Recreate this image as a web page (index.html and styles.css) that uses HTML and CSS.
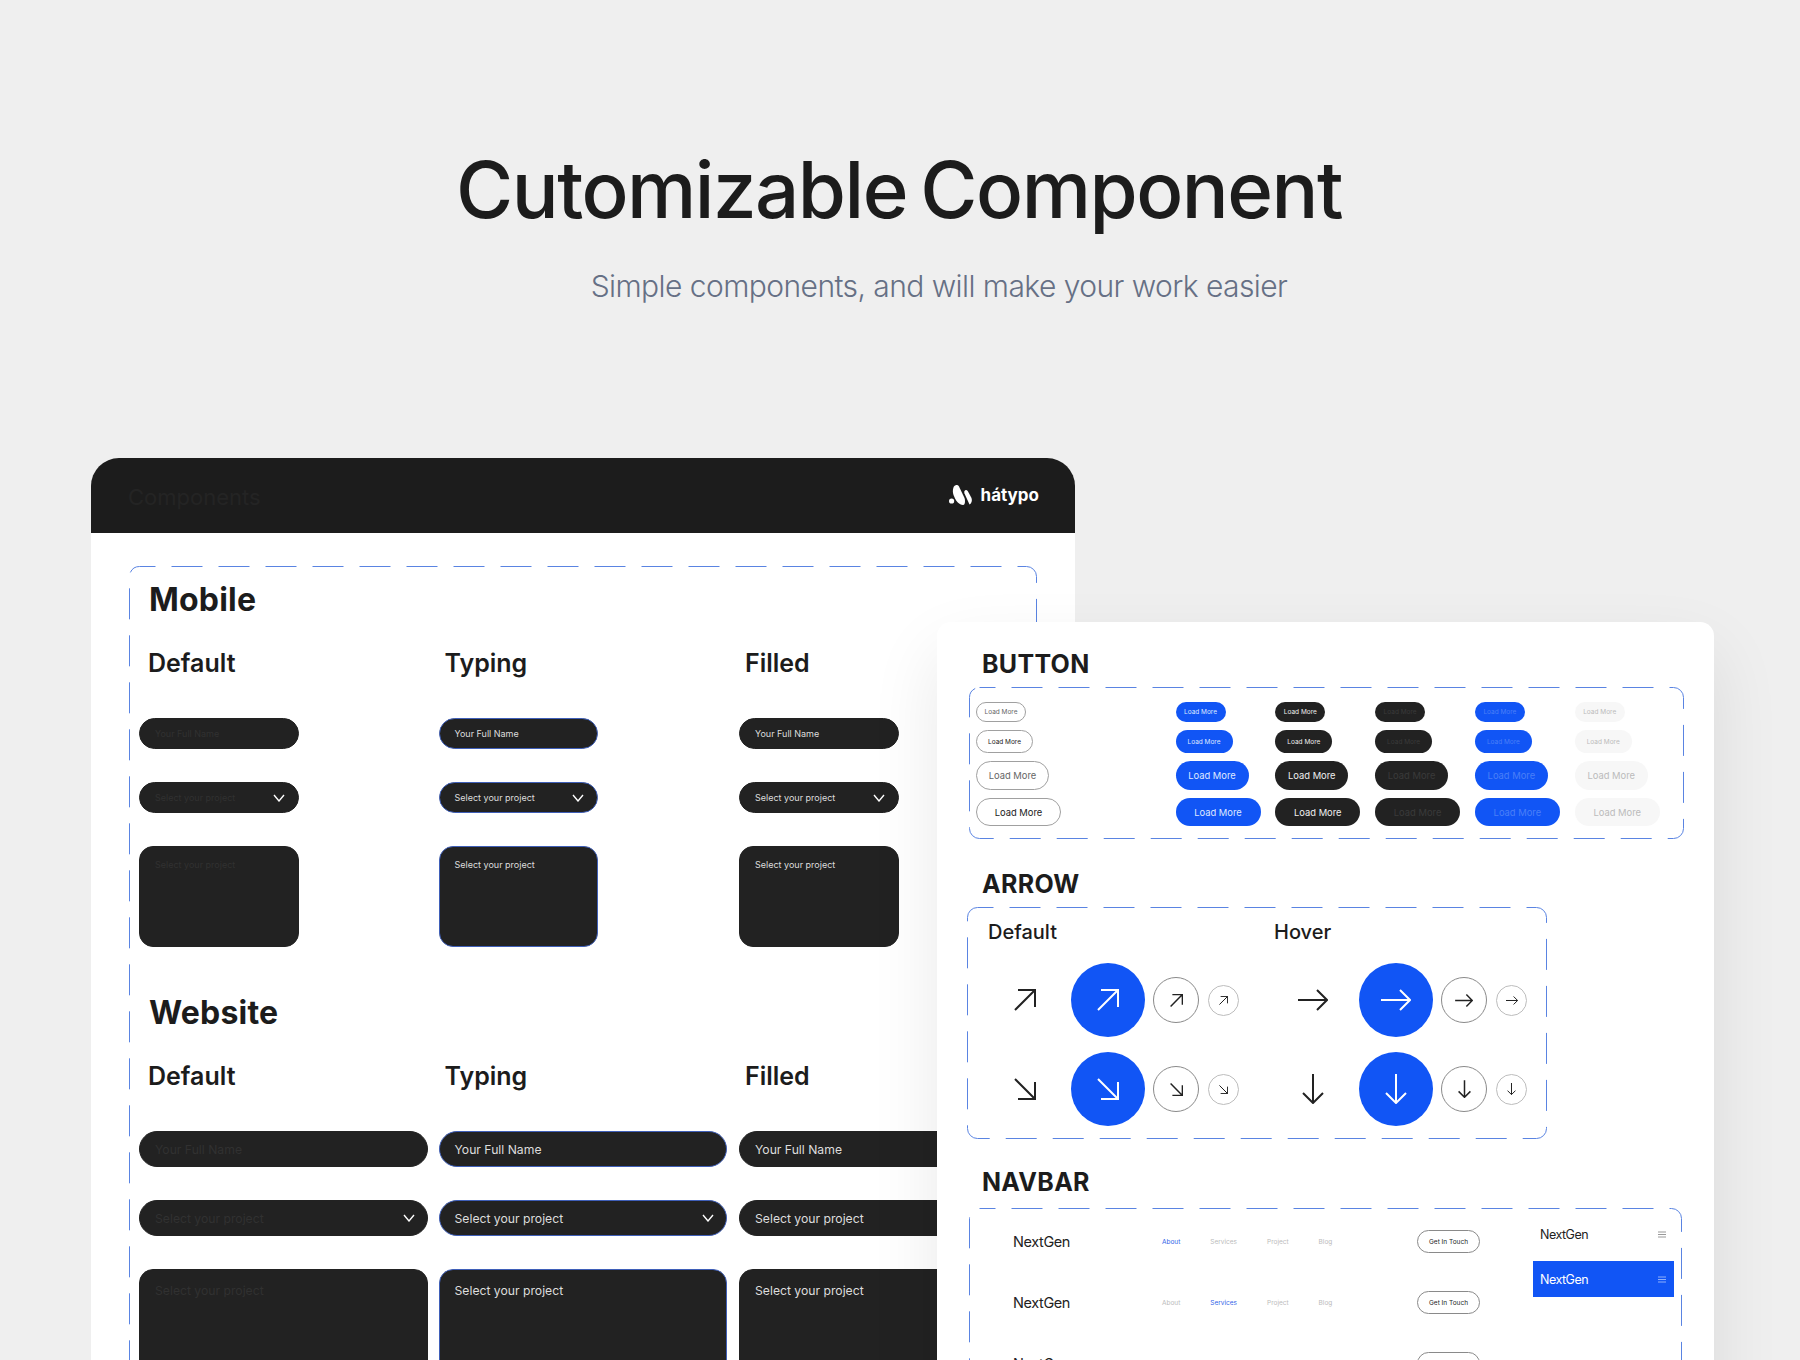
FILE: index.html
```html
<!DOCTYPE html>
<html lang="en">
<head>
<meta charset="utf-8">
<title>Cutomizable Component</title>
<link rel="stylesheet" href="styles.css">
</head>
<body>
<svg class="defs" width="0" height="0" aria-hidden="true">
  <symbol id="a-ne" viewBox="0 0 22 22"><path d="M1 21 21 1M4 1H21V18"/></symbol>
  <symbol id="a-se" viewBox="0 0 22 22"><path d="M1 1 21 21M4 21H21V4"/></symbol>
  <symbol id="a-e" viewBox="0 0 30 22"><path d="M0 11H29M19 1 29 11 19 21"/></symbol>
  <symbol id="a-s" viewBox="0 0 22 30"><path d="M11 0V29M1 19 11 29 21 19"/></symbol>
  <symbol id="chev" viewBox="0 0 12 8"><path d="M1 1 6 7 11 1"/></symbol>
  <symbol id="burger" viewBox="0 0 8 7"><path d="M0 1H8M0 3.5H8M0 6H8"/></symbol>
</svg>

<header class="hero">
  <h1 class="hero-title">Cutomizable Component</h1>
  <p class="hero-sub">Simple components, and will make your work easier</p>
</header>

<main class="stage">
  <section class="sheet">
    <div class="sheet-head">
      <span class="sheet-name">Components</span>
      <div class="brand">
        <svg class="brand-mark" viewBox="0 0 24 20"><circle cx="2.6" cy="16" r="2.6"/><path d="M5 1.5C6.5-.5 9-.5 10 1.5L15.5 13C16.5 16 16 20 14 20 10 19.5 7.5 16.5 6 13.5L4.5 10C3.5 7 3.8 3.5 5 1.5Z"/><path d="M15.5 6C16.5 4.5 18 5 19 6.5L22.5 13C23.5 15.5 22.5 18.5 20.5 19.5L15.5 8.5C15.2 7.5 15.2 6.5 15.5 6Z"/></svg>
        <span class="brand-name">hátypo</span>
      </div>
    </div>
    <div class="sheet-body">
      <div class="frame frame-forms">
        <svg class="dash"><rect x="0.5" y="0.5" rx="10"/></svg>

        <h2 class="group-title">Mobile</h2>
        <div class="form-grid form-grid-m">
          <div class="form-col">
            <h3 class="state">Default</h3>
            <div class="field field-m idle"><span>Your Full Name</span></div>
            <div class="field field-m idle"><span>Select your project</span><svg class="chev"><use href="#chev"/></svg></div>
            <div class="area area-m idle"><span>Select your project</span></div>
          </div>
          <div class="form-col">
            <h3 class="state state-alt">Typing</h3>
            <div class="field field-m typing"><span>Your Full Name</span></div>
            <div class="field field-m typing"><span>Select your project</span><svg class="chev"><use href="#chev"/></svg></div>
            <div class="area area-m typing"><span>Select your project</span></div>
          </div>
          <div class="form-col">
            <h3 class="state state-alt">Filled</h3>
            <div class="field field-m filled"><span>Your Full Name</span></div>
            <div class="field field-m filled"><span>Select your project</span><svg class="chev"><use href="#chev"/></svg></div>
            <div class="area area-m filled"><span>Select your project</span></div>
          </div>
        </div>

        <h2 class="group-title group-title-next">Website</h2>
        <div class="form-grid form-grid-w">
          <div class="form-col">
            <h3 class="state">Default</h3>
            <div class="field field-w idle"><span>Your Full Name</span></div>
            <div class="field field-w idle"><span>Select your project</span><svg class="chev"><use href="#chev"/></svg></div>
            <div class="area area-w idle"><span>Select your project</span></div>
          </div>
          <div class="form-col">
            <h3 class="state state-alt">Typing</h3>
            <div class="field field-w typing"><span>Your Full Name</span></div>
            <div class="field field-w typing"><span>Select your project</span><svg class="chev"><use href="#chev"/></svg></div>
            <div class="area area-w typing"><span>Select your project</span></div>
          </div>
          <div class="form-col">
            <h3 class="state state-alt">Filled</h3>
            <div class="field field-w filled"><span>Your Full Name</span></div>
            <div class="field field-w filled"><span>Select your project</span><svg class="chev"><use href="#chev"/></svg></div>
            <div class="area area-w filled"><span>Select your project</span></div>
          </div>
        </div>
      </div>
    </div>
  </section>

  <section class="kit">
    <h2 class="kit-title">BUTTON</h2>
    <div class="frame frame-buttons">
      <svg class="dash"><rect x="0.5" y="0.5" rx="10"/></svg>
      <div class="btn-grid">
        <span class="btn s1 outline">Load More</span><span class="btn s1 blue">Load More</span><span class="btn s1 dark">Load More</span><span class="btn s1 dark-dim">Load More</span><span class="btn s1 blue-dim">Load More</span><span class="btn s1 light">Load More</span>
        <span class="btn s2 outline strong">Load More</span><span class="btn s2 blue">Load More</span><span class="btn s2 dark">Load More</span><span class="btn s2 dark-dim">Load More</span><span class="btn s2 blue-dim">Load More</span><span class="btn s2 light">Load More</span>
        <span class="btn s3 outline">Load More</span><span class="btn s3 blue">Load More</span><span class="btn s3 dark">Load More</span><span class="btn s3 dark-dim">Load More</span><span class="btn s3 blue-dim">Load More</span><span class="btn s3 light">Load More</span>
        <span class="btn s4 outline strong">Load More</span><span class="btn s4 blue">Load More</span><span class="btn s4 dark">Load More</span><span class="btn s4 dark-dim">Load More</span><span class="btn s4 blue-dim">Load More</span><span class="btn s4 light">Load More</span>
      </div>
    </div>

    <h2 class="kit-title kit-title-arrow">ARROW</h2>
    <div class="frame frame-arrows">
      <svg class="dash"><rect x="0.5" y="0.5" rx="10"/></svg>
      <div class="arrow-group">
        <h3 class="arrow-label">Default</h3>
        <div class="arrow-row">
          <span class="plain"><svg class="i22"><use href="#a-ne"/></svg></span>
          <span class="disc big"><svg class="i22"><use href="#a-ne"/></svg></span>
          <span class="disc mid"><svg class="i13"><use href="#a-ne"/></svg></span>
          <span class="disc small"><svg class="i9"><use href="#a-ne"/></svg></span>
        </div>
        <div class="arrow-row">
          <span class="plain"><svg class="i22"><use href="#a-se"/></svg></span>
          <span class="disc big"><svg class="i22"><use href="#a-se"/></svg></span>
          <span class="disc mid"><svg class="i13"><use href="#a-se"/></svg></span>
          <span class="disc small"><svg class="i9"><use href="#a-se"/></svg></span>
        </div>
      </div>
      <div class="arrow-group">
        <h3 class="arrow-label arrow-label-alt">Hover</h3>
        <div class="arrow-row">
          <span class="plain"><svg class="h30"><use href="#a-e"/></svg></span>
          <span class="disc big"><svg class="h30"><use href="#a-e"/></svg></span>
          <span class="disc mid"><svg class="h18"><use href="#a-e"/></svg></span>
          <span class="disc small"><svg class="h12"><use href="#a-e"/></svg></span>
        </div>
        <div class="arrow-row">
          <span class="plain"><svg class="v30"><use href="#a-s"/></svg></span>
          <span class="disc big"><svg class="v30"><use href="#a-s"/></svg></span>
          <span class="disc mid"><svg class="v18"><use href="#a-s"/></svg></span>
          <span class="disc small"><svg class="v12"><use href="#a-s"/></svg></span>
        </div>
      </div>
    </div>

    <h2 class="kit-title kit-title-nav">NAVBAR</h2>
    <div class="frame frame-nav">
      <svg class="dash"><rect x="0.5" y="0.5" rx="10"/></svg>
      <div class="nav-list">
        <div class="nav-row">
          <span class="nav-logo">NextGen</span>
          <div class="nav-links"><span class="on">About</span><span>Services</span><span>Project</span><span>Blog</span></div>
          <span class="nav-cta">Get In Touch</span>
        </div>
        <div class="nav-row">
          <span class="nav-logo">NextGen</span>
          <div class="nav-links"><span>About</span><span class="on">Services</span><span>Project</span><span>Blog</span></div>
          <span class="nav-cta">Get In Touch</span>
        </div>
        <div class="nav-row">
          <span class="nav-logo">NextGen</span>
          <div class="nav-links"><span>About</span><span>Services</span><span class="on">Project</span><span>Blog</span></div>
          <span class="nav-cta">Get In Touch</span>
        </div>
      </div>
      <div class="nav-mobile">
        <div class="m-bar"><span>NextGen</span><svg class="burger"><use href="#burger"/></svg></div>
        <div class="m-bar m-bar-on"><span>NextGen</span><svg class="burger"><use href="#burger"/></svg></div>
      </div>
    </div>
  </section>
</main>
</body>
</html>
```

FILE: styles.css
```css
* { box-sizing: border-box; }
html, body { margin: 0; height: 1360px; overflow: hidden; }
body {
  width: 1800px;
  background: #efefef;
  color: #1c1c1c;
  font-family: Inter, "Liberation Sans", sans-serif;
}
h1, h2, h3, p { margin: 0; }
.defs { position: absolute; }
symbol path { vector-effect: non-scaling-stroke; }

.hero { height: 458px; padding-top: 140px; text-align: center; }
.hero-title { margin-left: -2px; font-size: 78px; line-height: 100px; font-weight: 500; letter-spacing: -1.5px; word-spacing: -6px; }
.hero-sub { margin: 26px 0 0 78px; font-size: 30px; line-height: 40px; font-weight: 300; color: #667085; letter-spacing: -.56px; }

.stage { position: relative; }

/* back sheet */
.sheet { margin-left: 91px; width: 984px; height: 1000px; background: #fff; border-radius: 28px 28px 0 0; }
.sheet-head {
  height: 75px; display: flex; align-items: center; justify-content: space-between;
  padding: 0 36px 2px 37px; background: #1c1c1c; border-radius: 28px 28px 0 0;
}
.sheet-name { margin-top: 4px; font-size: 22px; color: #242424; }
.brand { display: flex; align-items: center; gap: 8px; }
.brand-mark { width: 24px; height: 20px; fill: #fff; }
.brand-name { color: #fff; font-size: 17px; font-weight: 700; }
.sheet-body { padding: 33px 38px 0 38px; }

.frame { position: relative; }
.dash { position: absolute; inset: 0; width: 100%; height: 100%; overflow: visible; pointer-events: none; }
.dash rect {
  width: calc(100% - 1px); height: calc(100% - 1px);
  fill: none; stroke: #5a84e2; stroke-width: 1; stroke-dasharray: 31 16; stroke-dashoffset: 15;
}

.frame-forms { height: 934px; padding: 14px 0 0 10px; }
.group-title { margin-left: 10px; font-size: 32px; line-height: 40px; font-weight: 700; letter-spacing: .2px; color: #1c1c1c; }
.group-title-next { margin-top: 46px; }

.form-grid { display: grid; grid-template-columns: 299.5px 300.5px 300px; margin-top: 28px; }
.form-col { display: flex; flex-direction: column; align-items: flex-start; }
.state { margin: 0 0 40px 9px; font-size: 25px; line-height: 30px; font-weight: 600; }
.state-alt { margin-left: 6px; }

.field, .area { color: #ddd; background: #222; border: 1px solid #222; }
.field { display: flex; align-items: center; justify-content: space-between; border-radius: 18px; }
.field-m { width: 159.5px; height: 31px; margin-bottom: 33px; padding: 0 13px 0 15px; font-size: 9px; }
.field-w { width: 288.5px; height: 36px; margin-bottom: 33px; padding: 0 12px 0 15px; font-size: 12.2px; }
.area { display: block; }
.area-m { width: 159.5px; height: 101px; padding: 12px 15px; border-radius: 14px; font-size: 9px; line-height: 11px; }
.area-w { width: 288.5px; height: 140px; padding: 13px 15px; border-radius: 14px; font-size: 12.2px; line-height: 16px; }
.idle { color: #313131; }
.typing { border-color: #3f5fb8; }
.chev { flex: none; width: 12px; height: 8px; fill: none; stroke: #fff; stroke-width: 1.4; }

/* front kit card */
.kit {
  position: absolute; left: 937px; top: 164px;
  width: 777px; height: 800px; padding: 27px 0 0 32px;
  background: #fff; border-radius: 14px;
  box-shadow: 0 30px 70px rgba(0, 0, 0, .09);
}
.kit-title { margin-left: 13px; font-size: 25px; line-height: 30px; font-weight: 700; letter-spacing: .3px; }
.kit-title-arrow { margin-top: 30px; }
.kit-title-nav { margin-top: 28px; }

.frame-buttons { width: 715px; height: 152px; margin-top: 8px; padding: 15px 0 0 7px; }
.btn-grid { display: grid; grid-template-columns: 199.5px repeat(5, 99.8px); row-gap: 8px; align-items: center; justify-items: start; }
.btn { display: flex; align-items: center; justify-content: center; white-space: nowrap; border-radius: 15px; font-weight: 400; }
.s1 { width: 50px; height: 20px; font-size: 6.5px; }
.s2 { width: 57px; height: 23px; font-size: 6.5px; }
.s3 { width: 73px; height: 29px; font-size: 9.4px; }
.s4 { width: 85px; height: 28px; font-size: 9.4px; }
.outline { background: #fff; border: 1px solid #a0a0a0; color: #666; }
.strong { color: #222; }
.blue { background: #1155f5; color: #dfe8ff; }
.dark { background: #222; color: #eee; }
.dark-dim { background: #222; color: #3a3a3a; }
.blue-dim { background: #1155f5; color: #4a7ff7; }
.light { background: #f7f7f7; color: #bbb; }

.frame-arrows { display: flex; gap: 44px; width: 580px; height: 232px; margin: 8px 0 0 -2px; padding: 13px 0 0 28px; }
.arrow-group { display: flex; flex-direction: column; gap: 15px; width: 244px; }
.arrow-label { margin: 0 0 4px -7px; font-size: 20px; line-height: 24px; font-weight: 500; }
.arrow-label-alt { margin-left: -9px; }
.arrow-row { display: flex; align-items: center; color: #222; }
.plain { display: flex; align-items: center; justify-content: center; width: 60px; margin-right: 16px; }
.disc { display: flex; align-items: center; justify-content: center; flex: none; border-radius: 50%; background: #fff; }
.big { width: 74px; height: 74px; margin-right: 8px; background: #1155f5; color: #fff; }
.mid { width: 46px; height: 46px; margin-right: 9px; border: 1px solid #8a8a8a; }
.small { width: 31px; height: 31px; border: 1px solid #bdbdbd; }
.arrow-row svg { fill: none; stroke: currentColor; overflow: visible; }
.i22 { width: 22px; height: 22px; stroke-width: 2; }
.i13 { width: 13px; height: 13px; stroke-width: 1.5; }
.i9 { width: 9px; height: 9px; stroke-width: 1; }
.h30 { width: 30px; height: 22px; stroke-width: 2; }
.h18 { width: 18px; height: 13px; stroke-width: 1.5; }
.h12 { width: 12px; height: 9px; stroke-width: 1; }
.v30 { width: 22px; height: 30px; stroke-width: 2; }
.v18 { width: 13px; height: 18px; stroke-width: 1.5; }
.v12 { width: 9px; height: 12px; stroke-width: 1; }

.frame-nav { display: flex; justify-content: space-between; width: 713px; height: 300px; margin-top: 11px; }
.nav-list { display: flex; flex-direction: column; gap: 38px; width: 511px; padding: 22px 0 0 44px; }
.nav-row { display: flex; align-items: center; height: 23px; }
.nav-logo { width: 149px; font-size: 14.5px; letter-spacing: -.4px; color: #222; }
.nav-links { display: flex; gap: 30px; font-size: 6.5px; color: #bbb; }
.nav-links .on { color: #2f62e8; }
.nav-cta {
  display: flex; align-items: center; justify-content: center; margin-left: auto;
  width: 63px; height: 23px; border: 1px solid #8a8a8a; border-radius: 12px; font-size: 6.5px; color: #222;
}
.nav-mobile { display: flex; flex-direction: column; gap: 9px; width: 141px; margin-right: 8px; padding-top: 8px; }
.m-bar { display: flex; align-items: center; justify-content: space-between; height: 36px; padding: 0 8px 0 7px; font-size: 12.5px; letter-spacing: -.5px; color: #222; }
.m-bar-on { background: #1155f5; color: #fff; }
.burger { width: 8px; height: 7px; fill: none; stroke: #999; stroke-width: 1; }
.m-bar-on .burger { stroke: #8fb0fb; }
```
